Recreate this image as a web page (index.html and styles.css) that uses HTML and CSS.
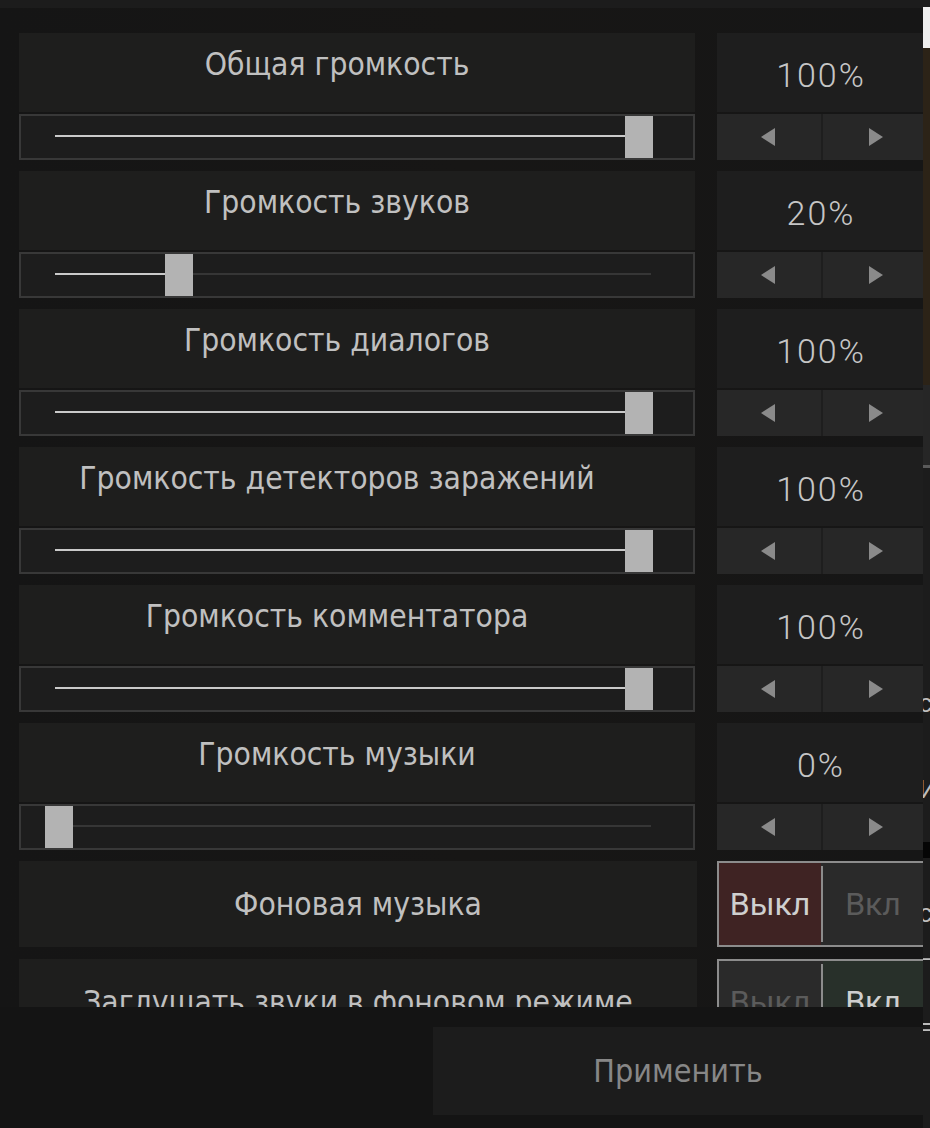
FILE: index.html
```html
<!DOCTYPE html>
<html lang="ru">
<head>
    <meta charset="UTF-8">
    <title>Звук</title>
    <link rel="stylesheet" href="styles.css">
</head>
<body>
    <div class="app">
        <div class="panel">
            <div class="topbar"></div>

            <div class="scroll">
                <div class="row">
                    <div class="label">Общая громкость</div>
                    <div class="value">100%</div>
                    <div class="slider">
                        <div class="track"><div class="fill" style="width: 100%"></div></div>
                        <div class="thumb" style="left: 604px"></div>
                    </div>
                    <div class="arrows">
                        <div class="arrow"><span class="tri left"></span></div>
                        <div class="arrow"><span class="tri right"></span></div>
                    </div>
                </div>

                <div class="row">
                    <div class="label">Громкость звуков</div>
                    <div class="value">20%</div>
                    <div class="slider">
                        <div class="track"><div class="fill" style="width: 20%"></div></div>
                        <div class="thumb" style="left: 144px"></div>
                    </div>
                    <div class="arrows">
                        <div class="arrow"><span class="tri left"></span></div>
                        <div class="arrow"><span class="tri right"></span></div>
                    </div>
                </div>

                <div class="row">
                    <div class="label">Громкость диалогов</div>
                    <div class="value">100%</div>
                    <div class="slider">
                        <div class="track"><div class="fill" style="width: 100%"></div></div>
                        <div class="thumb" style="left: 604px"></div>
                    </div>
                    <div class="arrows">
                        <div class="arrow"><span class="tri left"></span></div>
                        <div class="arrow"><span class="tri right"></span></div>
                    </div>
                </div>

                <div class="row">
                    <div class="label">Громкость детекторов заражений</div>
                    <div class="value">100%</div>
                    <div class="slider">
                        <div class="track"><div class="fill" style="width: 100%"></div></div>
                        <div class="thumb" style="left: 604px"></div>
                    </div>
                    <div class="arrows">
                        <div class="arrow"><span class="tri left"></span></div>
                        <div class="arrow"><span class="tri right"></span></div>
                    </div>
                </div>

                <div class="row">
                    <div class="label">Громкость комментатора</div>
                    <div class="value">100%</div>
                    <div class="slider">
                        <div class="track"><div class="fill" style="width: 100%"></div></div>
                        <div class="thumb" style="left: 604px"></div>
                    </div>
                    <div class="arrows">
                        <div class="arrow"><span class="tri left"></span></div>
                        <div class="arrow"><span class="tri right"></span></div>
                    </div>
                </div>

                <div class="row">
                    <div class="label">Громкость музыки</div>
                    <div class="value">0%</div>
                    <div class="slider">
                        <div class="track"><div class="fill" style="width: 0%"></div></div>
                        <div class="thumb" style="left: 24px"></div>
                    </div>
                    <div class="arrows">
                        <div class="arrow"><span class="tri left"></span></div>
                        <div class="arrow"><span class="tri right"></span></div>
                    </div>
                </div>

                <div class="row toggle-row">
                    <div class="label">Фоновая музыка</div>
                    <div class="toggle">
                        <div class="opt off active">Выкл</div>
                        <div class="sep"></div>
                        <div class="opt on">Вкл</div>
                    </div>
                </div>

                <div class="row toggle-row">
                    <div class="label">Заглушать звуки в фоновом режиме</div>
                    <div class="toggle">
                        <div class="opt off">Выкл</div>
                        <div class="sep"></div>
                        <div class="opt on active">Вкл</div>
                    </div>
                </div>
            </div>

            <div class="bottombar">
                <button class="apply">Применить</button>
            </div>
        </div>

        <div class="behind">
            <div class="b-dark"></div>
            <div class="b-white"></div>
            <div class="b-brown"></div>
            <div class="b-grey"></div>
            <div class="b-line"></div>
            <div class="b-rest">
                <span class="frag f1">с</span>
                <span class="frag f2">И</span>
                <div class="b-black"></div>
                <span class="frag f3">с</span>
                <span class="frag f4">–</span>
                <span class="frag f5">=</span>
            </div>
        </div>
    </div>
</body>
</html>
```

FILE: styles.css
```css
html, body {
    margin: 0;
    padding: 0;
    height: 100%;
    background-color: #151515;
    overflow: hidden;
}

.app {
    display: flex;
    height: 1128px;
}

.panel {
    width: 923px;
    display: flex;
    flex-direction: column;
    background: linear-gradient(90deg, #151515 0%, #171615 50%, #161616 100%);
}

.topbar {
    height: 8px;
    background-color: #1c1c1c;
}

.scroll {
    height: 974px;
    padding: 25px 0 0 19px;
    overflow: hidden;
}

.row {
    display: grid;
    grid-template-columns: 676px 206px;
    grid-template-rows: 79px 46px;
    column-gap: 22px;
    row-gap: 2px;
    margin-bottom: 11px;
}

.label {
    background-color: #1e1e1d;
    color: #c0c0c0;
    font-family: "DejaVu Sans Condensed", "DejaVu Sans", sans-serif;
    font-stretch: condensed;
    font-size: 31.5px;
    line-height: 38px;
    text-align: center;
    padding: 12px 40px 0 0;
    box-sizing: border-box;
    white-space: nowrap;
}

.value {
    background-color: #1e1e1e;
    color: #c6c6c6;
    font-family: Roboto, sans-serif;
    font-weight: 300;
    font-size: 34px;
    letter-spacing: 2px;
    line-height: 38px;
    text-align: center;
    padding: 23px 0 0 2px;
    box-sizing: border-box;
}

.slider {
    position: relative;
    background-color: #1d1d1d;
    border: 2px solid #383838;
}

.track {
    position: absolute;
    left: 34px;
    right: 42px;
    top: 19px;
    height: 2px;
    background-color: #363636;
}

.fill {
    height: 100%;
    background-color: #c9c9c9;
}

.thumb {
    position: absolute;
    top: 0;
    width: 28px;
    height: 42px;
    background-color: #b3b3b3;
}

.arrows {
    display: flex;
    gap: 2px;
    background-color: #1e1e1e;
}

.arrow {
    flex: 1;
    background-color: #272727;
    display: flex;
    align-items: center;
    justify-content: center;
}

.arrow:first-child {
    flex: 0 0 104px;
}

.tri {
    width: 0;
    height: 0;
    border-top: 9px solid transparent;
    border-bottom: 9px solid transparent;
}

.tri.left {
    border-right: 14px solid #8a8a8a;
    margin-right: 2px;
}

.tri.right {
    border-left: 14px solid #8a8a8a;
    margin-left: 6px;
}

.toggle-row {
    grid-template-rows: 86px;
    margin-bottom: 12px;
}

.toggle-row .label {
    padding: 0;
    display: flex;
    align-items: center;
    justify-content: center;
    width: 678px;
}

.toggle {
    display: flex;
    align-items: stretch;
    border: 2px solid #8c8c8c;
    border-right: none;
    background-color: #2a2a2a;
}

.opt {
    flex: 1;
    display: flex;
    align-items: center;
    justify-content: center;
    font-family: Roboto, "Liberation Sans", sans-serif;
    font-size: 32px;
    color: #5b5b5b;
    background-color: #2a2a2a;
}

.opt.off {
    flex: 0 0 102px;
}

.sep {
    width: 2px;
    margin: 3px 0;
    background-color: #8c8c8c;
}

.opt.off.active {
    background-color: #3f2323;
    color: #cfcfcf;
}

.opt.on.active {
    background-color: #28302a;
    color: #cfcfcf;
}

.bottombar {
    flex: 1;
    background-color: #141414;
    display: flex;
    justify-content: flex-end;
    align-items: flex-start;
    padding-top: 20px;
}

.apply {
    width: 490px;
    height: 88px;
    border: none;
    background-color: #1c1c1c;
    color: #878787;
    font-family: "DejaVu Sans Condensed", "DejaVu Sans", sans-serif;
    font-stretch: condensed;
    font-size: 32px;
}

.behind {
    flex: 1;
    display: flex;
    flex-direction: column;
    overflow: hidden;
    background-color: #1b1b1b;
}

.b-dark {
    height: 7px;
    background-color: #1c1c1c;
}

.b-white {
    height: 41px;
    background-color: #efefef;
}

.b-brown {
    height: 337px;
    background-color: #2c2317;
}

.b-grey {
    height: 80px;
    background-color: #262626;
}

.b-line {
    height: 3px;
    background-color: #5a5a5a;
}

.b-rest {
    flex: 1;
    position: relative;
    background-color: #1c1c1c;
    font-family: "Liberation Sans", sans-serif;
    color: #bdbdbd;
    font-size: 26px;
}

.frag {
    position: absolute;
    left: -4px;
    line-height: 1;
}

.f1 { top: 222px; }
.f2 { top: 308px; }
.f3 { top: 432px; }
.f4 { top: 476px; }
.f5 { top: 545px; }

.b-black {
    position: absolute;
    left: 0;
    right: 0;
    top: 374px;
    height: 16px;
    background-color: #050505;
}
```
